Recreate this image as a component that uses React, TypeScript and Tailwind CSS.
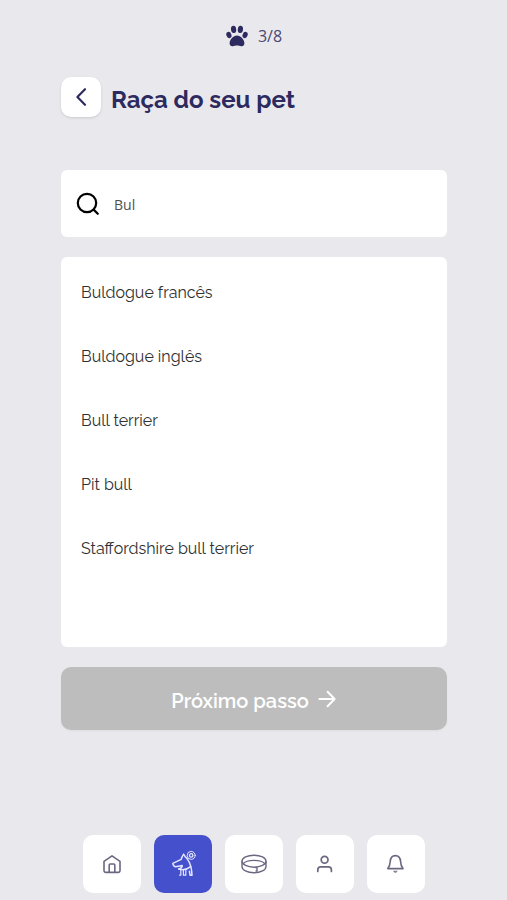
import { useState } from "react";

const breeds = [
  "Buldogue francês",
  "Buldogue inglês",
  "Bull terrier",
  "Pit bull",
  "Staffordshire bull terrier",
];

const PawIcon = () => (
  <svg width="22" height="22" viewBox="0 0 22 22" fill="currentColor">
    <ellipse cx="2.9" cy="10" rx="2.5" ry="3.3" transform="rotate(-20 2.9 10)" />
    <ellipse cx="7.6" cy="4.4" rx="2.6" ry="3.7" transform="rotate(-8 7.6 4.4)" />
    <ellipse cx="14.4" cy="4.4" rx="2.6" ry="3.7" transform="rotate(8 14.4 4.4)" />
    <ellipse cx="19.1" cy="10" rx="2.5" ry="3.3" transform="rotate(20 19.1 10)" />
    <path d="M11 10.6 C14.6 10.6 18.4 15 18.4 18.2 C18.4 20.4 17 21.4 15.2 21.2 C13.6 21 12.6 20.6 11 20.6 S8.4 21 6.8 21.2 C5 21.4 3.6 20.4 3.6 18.2 C3.6 15 7.4 10.6 11 10.6 Z" />
  </svg>
);

const HomeIcon = () => (
  <svg width="20" height="20" viewBox="0 0 20 20" fill="none" stroke="currentColor" strokeWidth="1.6" strokeLinejoin="round" strokeLinecap="round">
    <path d="M2 7.4 L10 1.8 L18 7.4 V16.6 A1.8 1.8 0 0 1 16.2 18.4 H3.8 A1.8 1.8 0 0 1 2 16.6 Z" />
    <path d="M7.2 18.2 V11 A1 1 0 0 1 8.2 10 H11.8 A1 1 0 0 1 12.8 11 V18.2" />
  </svg>
);

const DogIcon = () => (
  <svg width="26" height="28" viewBox="0 0 26 28" fill="none" stroke="currentColor" strokeWidth="1.5" strokeLinejoin="round" strokeLinecap="round">
    <path d="M13.6 4.4 C12.4 6 11.6 7.6 11.2 9.4 L2.8 13.4 C3 15 4.2 16.6 5.8 16.8 L12.2 15.4 C12.2 17.4 10.8 18.6 8.8 19" />
    <path d="M13.6 4.4 C14.6 6 15.6 7.4 17 8.6 C20.2 12.6 21.8 18.6 22 25.2 H20 L19.4 21.2" />
    <path d="M8.8 19 C13 20.4 17.2 19.4 20.6 16.6" />
    <path d="M10.8 20.4 V25.2 H9.6 M13.4 20.4 V25.2 M15.8 20.2 V25.2 H14.2" strokeWidth="1.2" />
    <circle cx="21.2" cy="5.4" r="4" strokeWidth="1" />
    <circle cx="21.2" cy="5.4" r="1.7" strokeWidth="1.3" />
  </svg>
);

const CollarIcon = () => (
  <svg width="26" height="20" viewBox="0 0 26 20" fill="none" stroke="currentColor" strokeWidth="1.4" strokeLinejoin="round">
    <ellipse cx="13" cy="7.2" rx="12" ry="6" />
    <path d="M1 7.2 V12.4 C1 16 6.2 18.8 13 18.8 S25 16 25 12.4 V7.2" />
    <path d="M2 10 C4 7.4 8.2 6.4 13 6.4 S22 7.4 24 10" />
    <path d="M14.2 13.6 H16 V17 H14.6" />
  </svg>
);

const UserIcon = () => (
  <svg width="20" height="20" viewBox="0 0 20 20" fill="none" stroke="currentColor" strokeWidth="1.7" strokeLinecap="round">
    <circle cx="9.6" cy="5.8" r="3.4" />
    <path d="M2.8 17.4 V15.8 A3 3 0 0 1 5.8 12.8 H13.4 A3 3 0 0 1 16.4 15.8 V17.4" />
  </svg>
);

const BellIcon = () => (
  <svg width="20" height="20" viewBox="0 0 20 20" fill="none" stroke="currentColor" strokeWidth="1.6" strokeLinejoin="round" strokeLinecap="round">
    <path d="M1.8 14.6 C3.8 12.4 4 10.8 4.2 7.6 C4.5 3.8 6.4 1.6 9.4 1.6 S14.3 3.8 14.6 7.6 C14.8 10.8 15 12.4 17 14.6 Z" />
    <path d="M7.8 17.6 C8.4 18.6 10.4 18.6 11 17.6 Z" fill="currentColor" strokeWidth="0.8" />
  </svg>
);

const navItems = [
  { label: "Início", icon: <HomeIcon /> },
  { label: "Pets", icon: <DogIcon />, active: true },
  { label: "Coleira", icon: <CollarIcon /> },
  { label: "Perfil", icon: <UserIcon /> },
  { label: "Notificações", icon: <BellIcon /> },
];

export default function App() {
  const [search, setSearch] = useState("Bul");
  const [selected, setSelected] = useState("");

  const results = breeds.filter((breed) =>
    breed.toLowerCase().includes(search.toLowerCase())
  );

  return (
    <div className="flex min-h-screen flex-col bg-[#e9e9ed] pt-6 pr-[60px] pb-[7px] pl-[61px] font-['Raleway','Lato',sans-serif] text-[#2d2a5f]">
      <div className="flex h-6 items-center justify-center gap-2.5">
        <PawIcon />
        <span className="font-['Open_Sans',sans-serif] text-base text-[#4b4872]">3/8</span>
      </div>

      <header className="mt-[29px] flex items-center gap-2.5">
        <button
          aria-label="Voltar"
          className="flex size-10 items-center justify-center rounded-[10px] bg-white shadow-sm"
        >
          <svg width="20" height="20" viewBox="0 0 20 20" fill="none" stroke="currentColor" strokeWidth="2.2" strokeLinecap="round" strokeLinejoin="round">
            <path d="M14 2.2 L6.4 10 L14 17.8" />
          </svg>
        </button>
        <h1 className="pt-1.5 text-2xl font-bold">Raça do seu pet</h1>
      </header>

      <label className="mt-[53px] flex h-[67px] items-center gap-3.5 rounded-md bg-white px-[15px]">
        <svg className="shrink-0 text-black" width="24" height="24" viewBox="0 0 24 24" fill="none" stroke="currentColor" strokeWidth="2.2" strokeLinecap="round">
          <circle cx="11" cy="11" r="9.2" />
          <path d="M17.6 17.6 L21.8 21.8" />
        </svg>
        <input
          type="text"
          aria-label="Buscar raça"
          value={search}
          onChange={(e) => setSearch(e.target.value)}
          className="w-full min-w-0 pt-0.5 font-['Open_Sans',sans-serif] text-sm text-[#505050] outline-none"
        />
      </label>

      <ul className="mt-5 min-h-[390px] rounded-md bg-white pt-1 pb-16">
        {results.map((breed) => (
          <li key={breed}>
            <button
              onClick={() => setSelected(breed)}
              className="flex h-16 w-full items-center px-5 text-left text-base text-[#303030]"
            >
              {breed}
            </button>
          </li>
        ))}
      </ul>

      <button
        disabled={!selected}
        className="mt-5 flex h-[63px] items-center justify-center gap-2 rounded-[10px] bg-[#4450cc] text-xl font-semibold text-white shadow-xs disabled:bg-[#bdbdbd]"
      >
        <span className="pt-1">Próximo passo</span>
        <svg width="20" height="20" viewBox="0 0 20 20" fill="none" stroke="currentColor" strokeWidth="2" strokeLinecap="round" strokeLinejoin="round">
          <path d="M2.4 10 H17.4 M10.6 2.8 L17.6 10 L10.6 17.2" />
        </svg>
      </button>

      <nav className="mt-auto flex justify-center gap-[13px]">
        {navItems.map((item) => (
          <button
            key={item.label}
            aria-label={item.label}
            className={`flex size-[58px] shrink-0 items-center justify-center rounded-[10px] ${item.active ? "bg-[#4450cc] text-[#e4e6ff]" : "bg-white text-[#6a6880]"}`}
          >
            {item.icon}
          </button>
        ))}
      </nav>
    </div>
  );
}
